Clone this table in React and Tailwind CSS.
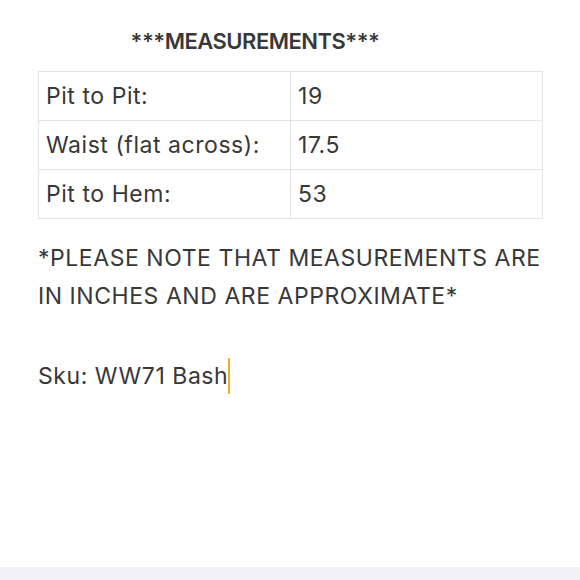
import React from 'react';

const rows = [
  ['Pit to Pit:', '19'],
  ['Waist (flat across):', '17.5'],
  ['Pit to Hem:', '53'],
];

export default function App() {
  return (
    <div className="w-[580px] h-[580px] bg-white flex flex-col text-[#383838]" style={{ fontFamily: 'Inter, "Liberation Sans", sans-serif' }}>
      <div className="flex-1 px-[38px] text-[23px] tracking-[0.55px]">
        {/* Title */}
        <h1 className="pt-[28px] pr-[70px] h-[71px] text-center text-[22px] font-semibold leading-[26px] tracking-[-0.5px]">
          ***MEASUREMENTS***
        </h1>

        {/* Measurements table */}
        <table className="w-[505px] border-collapse">
          <tbody>
            {rows.map(([label, value]) => (
              <tr key={label} className="h-[49px]">
                <td className="w-[252px] border border-[#e4e4e4] px-[7px] align-middle">{label}</td>
                <td className="border border-[#e4e4e4] px-[7px] align-middle">{value}</td>
              </tr>
            ))}
          </tbody>
        </table>

        {/* Note */}
        <p className="mt-[20px] leading-[38px]">
          *PLEASE NOTE THAT MEASUREMENTS ARE IN INCHES AND ARE APPROXIMATE*
        </p>
        <p className="mt-[42px] leading-[38px] flex items-center">
          Sku: WW71 Bash
          <span className="inline-block w-[2px] h-[36px] bg-[#e6b422]" />
        </p>
      </div>
      <div className="h-[13px] bg-[#f2f1f8]" />
    </div>
  );
}
